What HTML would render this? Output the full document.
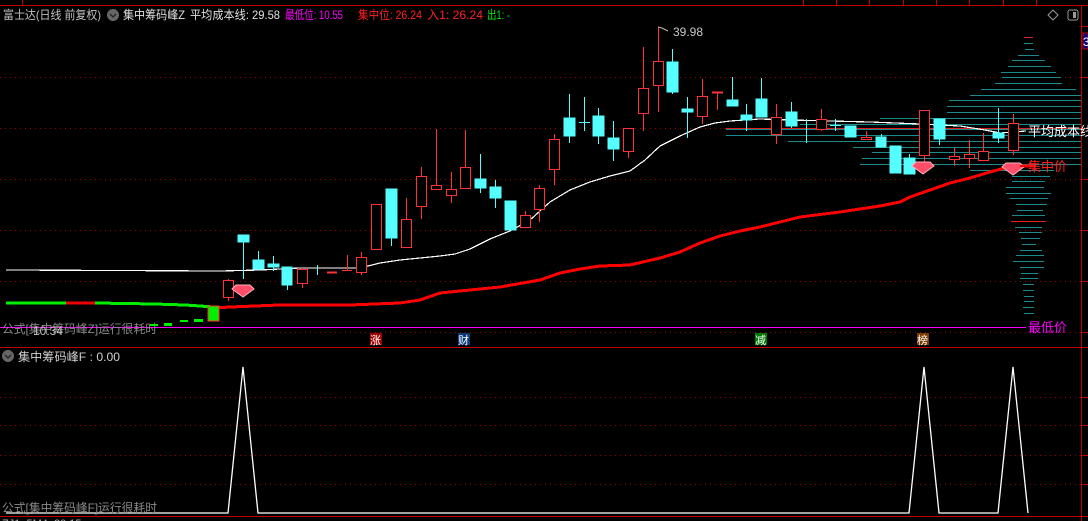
<!DOCTYPE html>
<html><head><meta charset="utf-8"><style>
html,body{margin:0;padding:0;background:#000;width:1088px;height:521px;overflow:hidden}
svg{display:block}
text{font-family:"Liberation Sans","Noto Sans CJK SC",sans-serif}
</style></head><body>
<svg width="1088" height="521" viewBox="0 0 1088 521" xmlns="http://www.w3.org/2000/svg" shape-rendering="crispEdges">
<rect width="1088" height="521" fill="#000"/>
<line x1="0" y1="5.5" x2="1088" y2="5.5" stroke="#c00000"/>
<g stroke="#c00000"><line x1="22.5" y1="0" x2="22.5" y2="6"/><line x1="803.5" y1="0" x2="803.5" y2="6"/><line x1="836.5" y1="0" x2="836.5" y2="6"/><line x1="869.5" y1="0" x2="869.5" y2="6"/><line x1="903.5" y1="0" x2="903.5" y2="6"/><line x1="936.5" y1="0" x2="936.5" y2="6"/><line x1="969.5" y1="0" x2="969.5" y2="6"/><line x1="1003.5" y1="0" x2="1003.5" y2="6"/><line x1="1036.5" y1="0" x2="1036.5" y2="6"/></g>
<line x1="1081.5" y1="5" x2="1081.5" y2="521" stroke="#c00000"/>
<g stroke="#c00000"><line x1="1081" y1="26.5" x2="1088" y2="26.5"/><line x1="1081" y1="77.5" x2="1088" y2="77.5"/><line x1="1081" y1="128.5" x2="1088" y2="128.5"/><line x1="1081" y1="179.5" x2="1088" y2="179.5"/><line x1="1081" y1="230.5" x2="1088" y2="230.5"/><line x1="1081" y1="281.5" x2="1088" y2="281.5"/><line x1="1081" y1="332.5" x2="1088" y2="332.5"/><line x1="1081" y1="397.5" x2="1088" y2="397.5"/><line x1="1081" y1="425.5" x2="1088" y2="425.5"/><line x1="1081" y1="455.5" x2="1088" y2="455.5"/><line x1="1081" y1="484.5" x2="1088" y2="484.5"/></g>
<rect x="1083" y="33" width="5" height="16" fill="#000080" stroke="#c00000"/>
<text x="1083" y="46" fill="#fff" font-size="12">3</text>
<g stroke="#9a0000" stroke-dasharray="1,4"><line x1="0" y1="77.5" x2="1081" y2="77.5"/><line x1="0" y1="128.5" x2="1081" y2="128.5"/><line x1="0" y1="179.5" x2="1081" y2="179.5"/><line x1="0" y1="230.5" x2="1081" y2="230.5"/><line x1="0" y1="281.5" x2="1081" y2="281.5"/><line x1="160" y1="332.5" x2="1081" y2="332.5"/>
<line x1="0" y1="397.5" x2="1081" y2="397.5"/><line x1="0" y1="425.5" x2="1081" y2="425.5"/><line x1="0" y1="455.5" x2="1081" y2="455.5"/><line x1="0" y1="484.5" x2="1081" y2="484.5"/></g>
<g stroke="#1a8a8a">
<line x1="1024" y1="43.5" x2="1033" y2="43.5"/><line x1="1025" y1="49.5" x2="1034" y2="49.5"/><line x1="1018" y1="55.5" x2="1039" y2="55.5"/><line x1="1012" y1="60.5" x2="1045" y2="60.5"/><line x1="1008" y1="66.5" x2="1051" y2="66.5"/><line x1="1001" y1="72.5" x2="1056" y2="72.5"/><line x1="1002" y1="77.5" x2="1061" y2="77.5"/><line x1="995" y1="83.5" x2="1062" y2="83.5"/><line x1="981" y1="89.5" x2="1076" y2="89.5"/><line x1="970" y1="95.5" x2="1081" y2="95.5"/><line x1="949" y1="100.5" x2="1081" y2="100.5"/><line x1="947" y1="106.5" x2="1081" y2="106.5"/><line x1="947" y1="112.5" x2="1081" y2="112.5"/><line x1="880" y1="118.5" x2="1081" y2="118.5"/><line x1="800" y1="124.5" x2="1081" y2="124.5"/><line x1="726" y1="129.5" x2="1081" y2="129.5"/><line x1="726" y1="135.5" x2="1081" y2="135.5"/><line x1="788" y1="141.5" x2="1081" y2="141.5"/><line x1="853" y1="147.5" x2="1081" y2="147.5"/><line x1="872" y1="152.5" x2="1081" y2="152.5"/><line x1="862" y1="158.5" x2="1081" y2="158.5"/><line x1="860" y1="164.5" x2="1081" y2="164.5"/><line x1="970" y1="170.5" x2="1054" y2="170.5"/><line x1="1012" y1="176.5" x2="1050" y2="176.5"/><line x1="1012" y1="181.5" x2="1045" y2="181.5"/><line x1="1006" y1="187.5" x2="1044" y2="187.5"/><line x1="1006" y1="193.5" x2="1051" y2="193.5"/><line x1="1010" y1="198.5" x2="1048" y2="198.5"/><line x1="1016" y1="204.5" x2="1047" y2="204.5"/><line x1="1017" y1="210.5" x2="1043" y2="210.5"/><line x1="1012" y1="215.5" x2="1045" y2="215.5"/><line x1="1015" y1="227.5" x2="1042" y2="227.5"/><line x1="1019" y1="232.5" x2="1042" y2="232.5"/><line x1="1021" y1="238.5" x2="1040" y2="238.5"/><line x1="1022" y1="244.5" x2="1036" y2="244.5"/><line x1="1020" y1="250.5" x2="1042" y2="250.5"/><line x1="1016" y1="255.5" x2="1044" y2="255.5"/><line x1="1013" y1="261.5" x2="1044" y2="261.5"/><line x1="1020" y1="267.5" x2="1044" y2="267.5"/><line x1="1021" y1="273.5" x2="1038" y2="273.5"/><line x1="1020" y1="278.5" x2="1038" y2="278.5"/><line x1="1023" y1="284.5" x2="1034" y2="284.5"/><line x1="1023" y1="290.5" x2="1034" y2="290.5"/><line x1="1024" y1="296.5" x2="1034" y2="296.5"/><line x1="1024" y1="301.5" x2="1034" y2="301.5"/><line x1="1023" y1="307.5" x2="1034" y2="307.5"/><line x1="1024" y1="313.5" x2="1034" y2="313.5"/>
</g>
<g stroke="#e02020"><line x1="1024" y1="37.5" x2="1033" y2="37.5"/><line x1="1011" y1="221.5" x2="1046" y2="221.5"/><line x1="726" y1="128.5" x2="1081" y2="128.5"/></g>
<g stroke-width="3" fill="none"><polyline stroke="#00ee00" points="6,303 66,303"/><polyline stroke="#ee0000" points="66,303 95,303"/><polyline stroke="#00ee00" points="95,303 155,304 185,305 200,306 213,307"/></g>
<polyline fill="none" stroke="#ff0000" stroke-width="3" stroke-linejoin="round" points="213,308 230,307 280,305 350,305 400,303 420,300 440,293 470,290 500,287 540,280 560,273 580,269 600,266 630,265 660,258 680,252 700,243 720,236 740,231 760,227 780,222 800,217 840,212 880,206 900,202 910,197 930,190 950,183 970,178 990,172 1005,168 1013,166 1036,166"/>
<polyline fill="none" stroke="#fff" stroke-width="1.2" points="6,270 220,271 260,270 300,268 360,268 380,263 400,260 420,258 440,256 455,254 470,249 490,239 510,231 530,220 550,202 570,190 590,182 610,176 630,171 645,160 660,146 680,136 700,127 715,123 730,121 760,119 790,120 830,121 870,122 920,124 960,126 985,130 1000,133 1026,131"/>
<g stroke="#ff3333" fill="none">
<line x1="228.5" y1="279" x2="228.5" y2="301"/><rect x="223.5" y="280.5" width="10" height="17" fill="#000"/>
<line x1="302.5" y1="268" x2="302.5" y2="288"/><rect x="297.5" y="269.5" width="10" height="14" fill="#000"/>
<line x1="327" y1="272.5" x2="337" y2="272.5" stroke-width="2"/>
<line x1="347.5" y1="255" x2="347.5" y2="270"/><line x1="342" y1="270.5" x2="352" y2="270.5"/>
<line x1="361.5" y1="252" x2="361.5" y2="275"/><rect x="356.5" y="257.5" width="10" height="15" fill="#000"/>
<rect x="371.5" y="204.5" width="10" height="45" fill="#000"/>
<line x1="406.5" y1="198" x2="406.5" y2="247"/><rect x="401.5" y="219.5" width="10" height="28" fill="#000"/>
<line x1="421.5" y1="167" x2="421.5" y2="219"/><rect x="416.5" y="176.5" width="10" height="30" fill="#000"/>
<line x1="436.5" y1="129" x2="436.5" y2="189"/><rect x="431.5" y="185.5" width="10" height="4" fill="#000"/>
<line x1="451.5" y1="172" x2="451.5" y2="203"/><rect x="446.5" y="189.5" width="10" height="6" fill="#000"/>
<line x1="465.5" y1="130" x2="465.5" y2="188"/><rect x="460.5" y="167.5" width="10" height="21" fill="#000"/>
<line x1="525.5" y1="211" x2="525.5" y2="228"/><rect x="520.5" y="215.5" width="10" height="12" fill="#000"/>
<line x1="539.5" y1="185" x2="539.5" y2="222"/><rect x="534.5" y="188.5" width="10" height="21" fill="#000"/>
<line x1="554.5" y1="134" x2="554.5" y2="185"/><rect x="549.5" y="139.5" width="10" height="30" fill="#000"/>
<line x1="628.5" y1="128" x2="628.5" y2="158"/><rect x="623.5" y="128.5" width="10" height="23" fill="#000"/>
<line x1="643.5" y1="47" x2="643.5" y2="131"/><rect x="638.5" y="88.5" width="10" height="25" fill="#000"/>
<line x1="658.5" y1="27" x2="658.5" y2="112"/><rect x="653.5" y="61.5" width="10" height="24" fill="#000"/>
<line x1="702.5" y1="79" x2="702.5" y2="124"/><rect x="697.5" y="96.5" width="10" height="20" fill="#000"/>
<line x1="717.5" y1="92" x2="717.5" y2="110"/><line x1="712" y1="92.5" x2="723" y2="92.5" stroke-width="2"/>
<line x1="776.5" y1="104" x2="776.5" y2="144"/><rect x="771.5" y="117.5" width="10" height="17" fill="#000"/>
<line x1="821.5" y1="109" x2="821.5" y2="131"/><rect x="816.5" y="119.5" width="10" height="10" fill="#000"/>
<line x1="866.5" y1="131" x2="866.5" y2="139"/><rect x="861.5" y="137.5" width="10" height="2" fill="#000"/>
<line x1="924.5" y1="155" x2="924.5" y2="162"/><rect x="919.5" y="110.5" width="10" height="45" fill="#000"/>
<line x1="954.5" y1="148" x2="954.5" y2="166"/><rect x="949.5" y="156.5" width="10" height="3" fill="#000"/>
<line x1="969.5" y1="140" x2="969.5" y2="168"/><rect x="964.5" y="154.5" width="10" height="4" fill="#000"/>
<line x1="983.5" y1="133" x2="983.5" y2="160"/><rect x="978.5" y="151.5" width="10" height="9" fill="#000"/>
<line x1="1013.5" y1="114" x2="1013.5" y2="155"/><rect x="1008.5" y="123.5" width="10" height="27" fill="#000"/>
</g>
<rect x="208" y="306" width="11" height="15" fill="#00ee00" stroke="#ff3333"/>
<g stroke="#55ffff" fill="#55ffff">
<line x1="243.5" y1="235" x2="243.5" y2="279"/><rect x="238" y="235" width="11" height="7"/>
<line x1="258.5" y1="251" x2="258.5" y2="270"/><rect x="253" y="260" width="11" height="9"/>
<line x1="273.5" y1="256" x2="273.5" y2="271"/><rect x="268" y="264" width="11" height="3"/>
<line x1="287.5" y1="267" x2="287.5" y2="290"/><rect x="282" y="267" width="10" height="18"/>
<line x1="317.5" y1="265" x2="317.5" y2="275"/>
<line x1="391.5" y1="189" x2="391.5" y2="246"/><rect x="386" y="189" width="11" height="49"/>
<line x1="480.5" y1="154" x2="480.5" y2="193"/><rect x="475" y="179" width="11" height="9"/>
<line x1="495.5" y1="180" x2="495.5" y2="208"/><rect x="490" y="187" width="11" height="11"/>
<rect x="505" y="201" width="11" height="29"/>
<line x1="569.5" y1="94" x2="569.5" y2="143"/><rect x="564" y="118" width="11" height="18"/>
<line x1="584.5" y1="97" x2="584.5" y2="131"/><line x1="579" y1="122.5" x2="590" y2="122.5"/>
<line x1="598.5" y1="108" x2="598.5" y2="144"/><rect x="593" y="116" width="11" height="20"/>
<line x1="613.5" y1="121" x2="613.5" y2="161"/><rect x="608" y="138" width="11" height="11"/>
<line x1="672.5" y1="49" x2="672.5" y2="94"/><rect x="667" y="62" width="11" height="30"/>
<line x1="687.5" y1="97" x2="687.5" y2="138"/><rect x="682" y="109" width="11" height="3"/>
<line x1="732.5" y1="77" x2="732.5" y2="106"/><rect x="727" y="100" width="11" height="6"/>
<line x1="746.5" y1="104" x2="746.5" y2="131"/><rect x="741" y="115" width="11" height="5"/>
<line x1="761.5" y1="78" x2="761.5" y2="117"/><rect x="756" y="99" width="11" height="18"/>
<line x1="791.5" y1="102" x2="791.5" y2="128"/><rect x="786" y="112" width="11" height="14"/>
<line x1="806.5" y1="119" x2="806.5" y2="143"/>
<line x1="835.5" y1="119" x2="835.5" y2="131"/><line x1="830" y1="125.5" x2="841" y2="125.5"/>
<rect x="845" y="126" width="11" height="11"/>
<line x1="881.5" y1="134" x2="881.5" y2="147"/><rect x="876" y="137" width="10" height="10"/>
<rect x="890" y="146" width="11" height="27"/>
<line x1="909.5" y1="154" x2="909.5" y2="174"/><rect x="904" y="158" width="11" height="16"/>
<line x1="939.5" y1="119" x2="939.5" y2="145"/><rect x="934" y="119" width="11" height="20"/>
<line x1="998.5" y1="108" x2="998.5" y2="143"/><rect x="993" y="133" width="11" height="5"/>
</g>
<g fill="#ff4d6a" stroke="#ffb0b8" stroke-width="1" shape-rendering="auto">
<polygon points="236,285 250,285 254,289 243,297 232,289"/>
<polygon points="916,162 930,162 934,166 923,174 912,166"/>
<polygon points="1006,163 1020,163 1024,167 1013,175 1002,167"/>
</g>
<line x1="1020" y1="166" x2="1030" y2="166" stroke="#ff0000" stroke-width="2"/>
<text x="1028" y="136" fill="#fff" font-size="13">平均成本线</text>
<text x="1028" y="171" fill="#ff2020" font-size="13">集中价</text>
<line x1="0" y1="327.5" x2="1026" y2="327.5" stroke="#ff00ff"/>
<text x="1028" y="332" fill="#ff00ff" font-size="13">最低价</text>
<polyline points="658,27 662,28 668,31" fill="none" stroke="#bbb" shape-rendering="auto"/>
<text x="673" y="36" fill="#c8c8c8" font-size="12">39.98</text>
<!-- header -->
<text x="3" y="19" font-size="12" fill="#c0c0c0" textLength="98" lengthAdjust="spacingAndGlyphs">富士达(日线 前复权)</text>
<circle cx="113" cy="15" r="6" fill="#666"/><path d="M110 14 L113 17 L116 14" stroke="#222" fill="none" stroke-width="1.3" shape-rendering="auto"/>
<text x="123" y="19" font-size="12" fill="#e0e0e0" textLength="62" lengthAdjust="spacingAndGlyphs">集中筹码峰Z</text>
<text x="190" y="19" font-size="12" fill="#e0e0e0" textLength="90" lengthAdjust="spacingAndGlyphs">平均成本线: 29.58</text>
<text x="285" y="19" font-size="12" fill="#ff00ff" textLength="58" lengthAdjust="spacingAndGlyphs">最低位: 10.55</text>
<text x="358" y="19" font-size="12" fill="#ff2020" textLength="64" lengthAdjust="spacingAndGlyphs">集中位: 26.24</text>
<text x="427" y="19" font-size="12" fill="#ff2020" textLength="56" lengthAdjust="spacingAndGlyphs">入1: 26.24</text>
<text x="487" y="19" font-size="12" fill="#00ee00" textLength="23" lengthAdjust="spacingAndGlyphs">出1: -</text>
<path d="M1053 10 L1058 15 L1053 20 L1048 15 Z" fill="none" stroke="#999" shape-rendering="auto"/>
<rect x="1068" y="10" width="10" height="10" rx="2" fill="none" stroke="#999"/><rect x="1073" y="12" width="3" height="6" fill="#999"/>
<text x="2" y="333" font-size="12" fill="#8a8a8a" textLength="155" lengthAdjust="spacingAndGlyphs">公式[集中筹码峰Z]运行很耗时</text>
<text x="33" y="335" font-size="12" fill="#c0c0c0">10.34</text>
<g fill="#00ee00"><rect x="164" y="323" width="8" height="3"/><rect x="180" y="320" width="8" height="2"/><rect x="194" y="319" width="9" height="3"/><rect x="150" y="324" width="8" height="2"/></g>
<rect x="370" y="333" width="12" height="12" fill="#a00000"/><text x="370" y="344" font-size="11" fill="#fff">涨</text>
<rect x="458" y="333" width="12" height="12" fill="#0a3a7a"/><text x="458" y="344" font-size="11" fill="#fff">财</text>
<rect x="755" y="333" width="12" height="12" fill="#007a00"/><text x="755" y="344" font-size="11" fill="#fff">减</text>
<rect x="917" y="333" width="12" height="12" fill="#7a3a00"/><text x="917" y="344" font-size="11" fill="#fff">榜</text>
<line x1="0" y1="347.5" x2="1088" y2="347.5" stroke="#c00000"/>
<circle cx="8" cy="356" r="6" fill="#666"/><path d="M5 355 L8 358 L11 355" stroke="#222" fill="none" stroke-width="1.3" shape-rendering="auto"/>
<text x="18" y="361" font-size="12" fill="#d0d0d0" textLength="102" lengthAdjust="spacingAndGlyphs">集中筹码峰F : 0.00</text>
<polyline fill="none" stroke="#fff" stroke-width="1.3" shape-rendering="auto" points="6,513 228,513 243,367 258,513 909,513 924,367 939,513 998,513 1013,367 1028,513"/>
<text x="2" y="512" font-size="12" fill="#8a8a8a" textLength="155" lengthAdjust="spacingAndGlyphs">公式[集中筹码峰F]运行很耗时</text>
<line x1="0" y1="516.5" x2="1088" y2="516.5" stroke="#c00000"/>
<text x="2" y="527" font-size="11" fill="#aaa">ZJ1: 5M4: 20.15</text>
</svg>
</body></html>
